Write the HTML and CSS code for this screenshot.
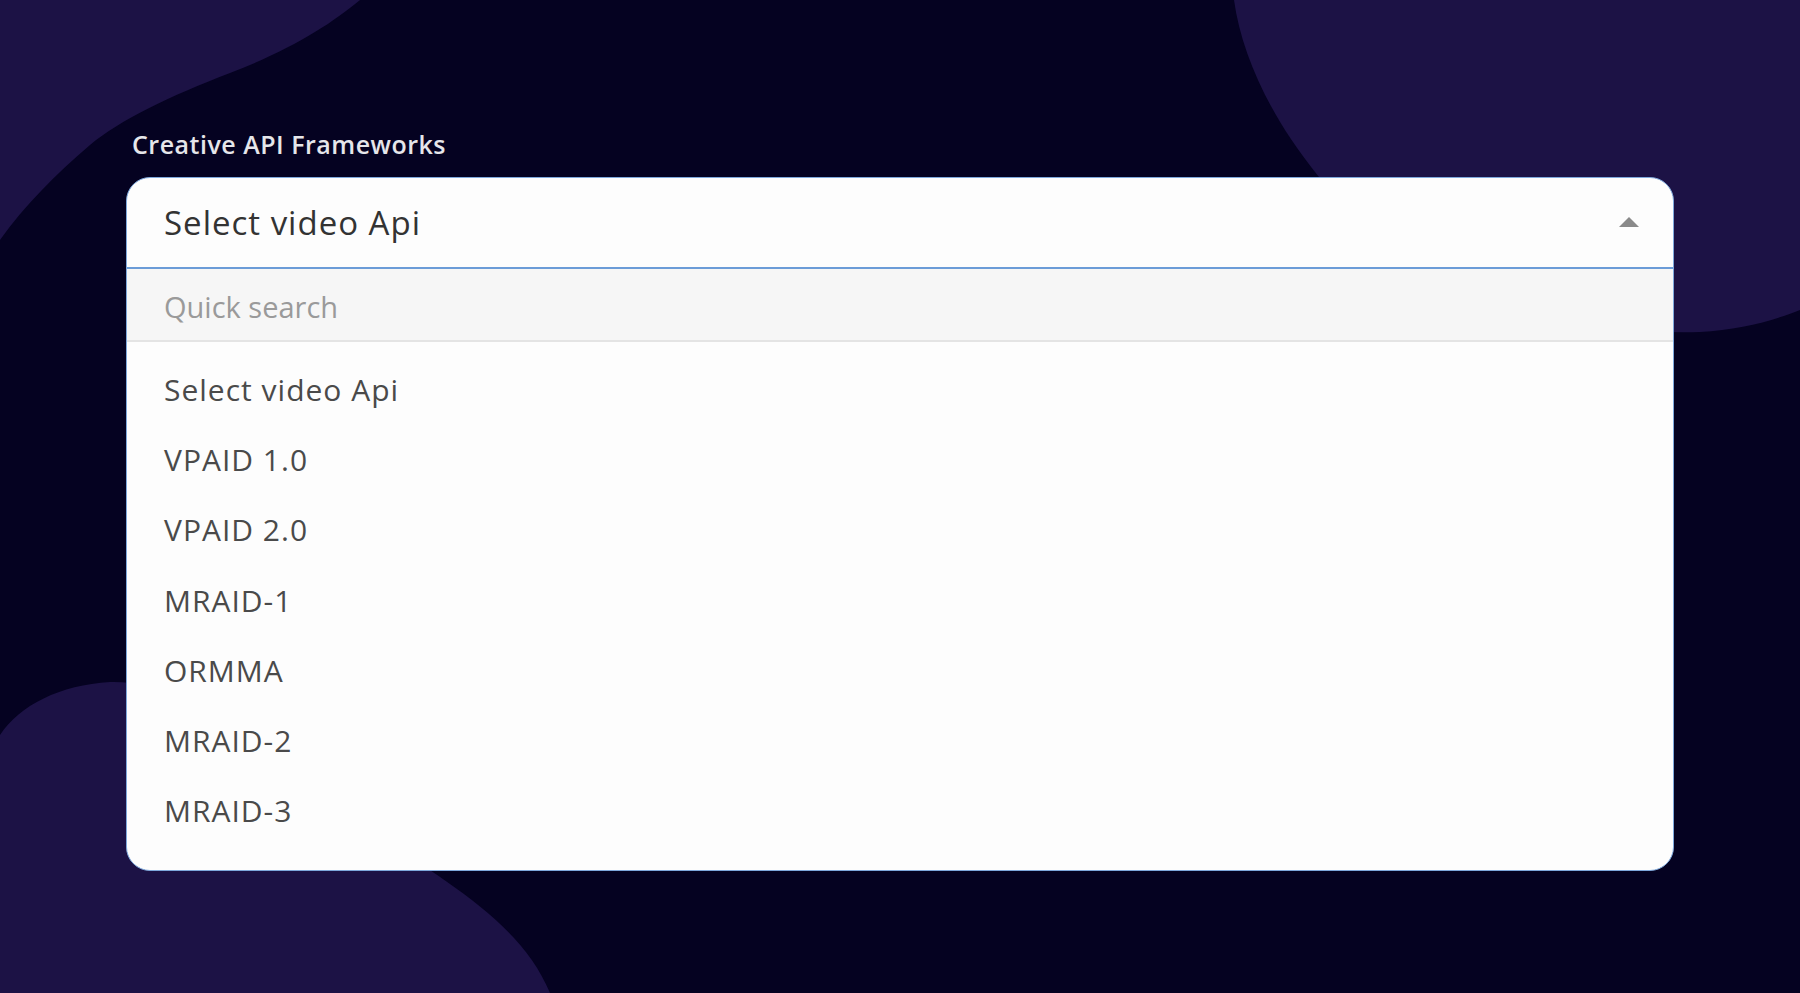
FILE: index.html
```html
<!DOCTYPE html>
<html lang="en">
<head>
<meta charset="utf-8">
<title>Creative API Frameworks</title>
<link rel="stylesheet" href="styles.css">
</head>
<body>
<svg class="backdrop" viewBox="0 0 1800 993" preserveAspectRatio="none" aria-hidden="true">
  <path class="blob" d="M0 0 H360 C330 25 290 50 230 73 C170 96 120 120 90 145 C55 175 25 205 0 240 Z"/>
  <path class="blob" d="M1234 0 C1245 80 1300 170 1380 240 C1460 305 1580 335 1700 332 C1740 330 1775 320 1800 310 V0 Z"/>
  <path class="blob" d="M0 993 V735 C20 705 60 685 110 682 C200 680 300 760 380 835 C440 880 520 920 550 993 Z"/>
</svg>
<main class="page">
  <label class="field-label">Creative API Frameworks</label>
  <div class="select">
    <div class="select-head">
      <span class="select-value">Select video Api</span>
      <span class="caret"></span>
    </div>
    <div class="select-search">
      <span class="placeholder">Quick search</span>
    </div>
    <ul class="options">
      <li class="option">Select video Api</li>
      <li class="option">VPAID 1.0</li>
      <li class="option">VPAID 2.0</li>
      <li class="option">MRAID-1</li>
      <li class="option">ORMMA</li>
      <li class="option">MRAID-2</li>
      <li class="option">MRAID-3</li>
    </ul>
  </div>
</main>
</body>
</html>
```

FILE: styles.css
```css
html, body {
  margin: 0;
  padding: 0;
  height: 100%;
}
body {
  background: #050221;
  font-family: "Open Sans", "Noto Sans", sans-serif;
  overflow: hidden;
  position: relative;
}
.backdrop {
  position: absolute;
  left: 0;
  top: 0;
  width: 1800px;
  height: 993px;
  z-index: 0;
}
.blob {
  fill: #1c1245;
}
.page {
  position: relative;
  z-index: 1;
  display: flex;
  flex-direction: column;
  padding: 128px 126px 0 126px;
}
.field-label {
  color: #e6e6ea;
  font-size: 25px;
  font-weight: 600;
  letter-spacing: 0.5px;
  line-height: 32px;
  padding-left: 6px;
  margin-bottom: 17px;
}
.select {
  background: #fdfdfd;
  border: 1px solid #7ea8dc;
  border-radius: 24px;
  overflow: hidden;
  width: 1546px;
}
.select-head {
  height: 89px;
  display: flex;
  align-items: center;
  justify-content: space-between;
  padding: 0 34px 0 37px;
  border-bottom: 2px solid #6b9cd8;
}
.select-value {
  color: #333333;
  font-size: 33px;
  letter-spacing: 1px;
}
.caret {
  width: 0;
  height: 0;
  border-left: 10px solid transparent;
  border-right: 10px solid transparent;
  border-bottom: 10px solid #8a8a8a;
  margin-top: -2px;
}
.select-search {
  height: 73px;
  display: flex;
  align-items: center;
  padding: 3px 37px 0 37px;
  box-sizing: border-box;
  background: #f6f6f6;
  border-bottom: 2px solid #e4e4e4;
}
.placeholder {
  color: #9a9a9a;
  font-size: 29px;
}
.options {
  list-style: none;
  margin: 0;
  padding: 12px 0 24px 0;
}
.option {
  height: 70.3px;
  display: flex;
  align-items: center;
  padding: 0 37px;
  color: #4a4a4a;
  font-size: 30px;
  letter-spacing: 1px;
}
```
